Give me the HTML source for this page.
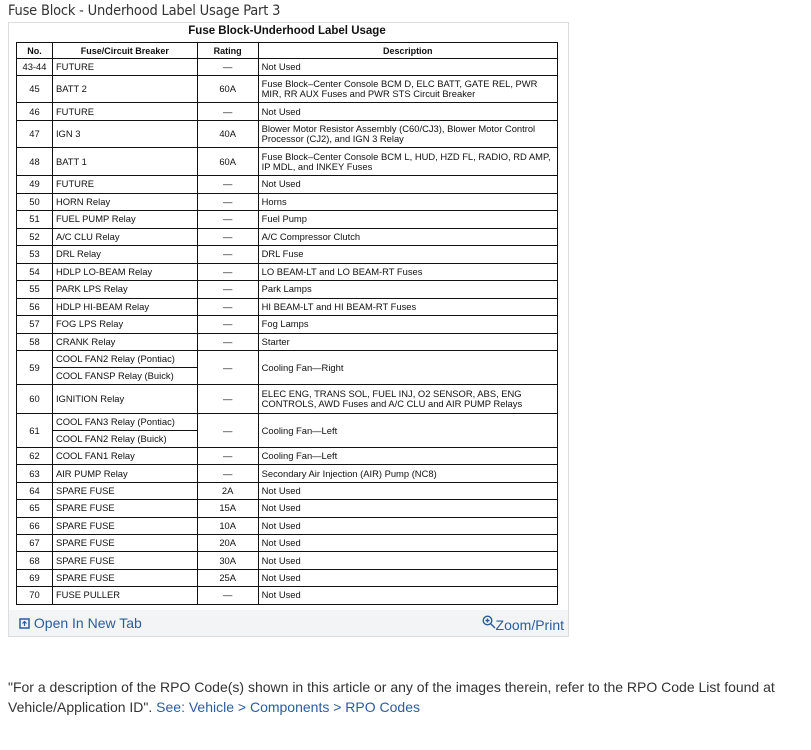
<!DOCTYPE html>
<html><head><meta charset="utf-8"><style>
body{margin:0;background:#fff;font-family:"Liberation Sans",sans-serif;}
.t{position:absolute;left:8px;top:3px;font-size:14.5px;color:#333;font-family:"DejaVu Sans Condensed","Liberation Sans Narrow","Liberation Sans",sans-serif;font-weight:300;letter-spacing:-0.2px}
.box{position:absolute;left:8px;top:22px;width:561px;height:615px;border:1px solid #ddd;background:#fff;box-sizing:border-box}
.cap{position:absolute;left:16px;top:25px;width:542px;text-align:center;font-weight:bold;font-size:11.5px;color:#111}
table{position:absolute;left:16px;top:42px;border-collapse:collapse;width:542px;font-size:9.4px;color:#111}
td,th{border:1px solid #111;padding:0 3px;line-height:10px}
th{font-size:9px;height:15px}
td.c{text-align:center}
.foot{position:absolute;left:9px;top:610px;width:559px;height:26px;background:#f2f4f6}
.foot a{position:absolute;top:5px;font-size:14px;color:#2a5da0;text-decoration:none;font-family:"Liberation Sans Narrow","Liberation Sans",sans-serif}
.p{position:absolute;left:8px;top:677px;width:790px;font-size:14px;line-height:20px;color:#333;font-family:"Liberation Sans Narrow","Liberation Sans",sans-serif}
.p a{color:#2a5da0;text-decoration:none}
</style></head><body>
<div class="t">Fuse Block - Underhood Label Usage Part 3</div>
<div class="box"></div>
<div class="cap">Fuse Block-Underhood Label Usage</div>
<table>
<colgroup><col style="width:36px"><col style="width:145px"><col style="width:61px"><col style="width:300px"></colgroup>
<tr><th>No.</th><th>Fuse/Circuit Breaker</th><th>Rating</th><th>Description</th></tr>
<tr style="height:17px"><td class="c">43-44</td><td>FUTURE</td><td class="c">—</td><td>Not Used</td></tr>
<tr style="height:27px"><td class="c">45</td><td>BATT 2</td><td class="c">60A</td><td>Fuse Block–Center Console BCM D, ELC BATT, GATE REL, PWR MIR, RR AUX Fuses and PWR STS Circuit Breaker</td></tr>
<tr style="height:18px"><td class="c">46</td><td>FUTURE</td><td class="c">—</td><td>Not Used</td></tr>
<tr style="height:27px"><td class="c">47</td><td>IGN 3</td><td class="c">40A</td><td>Blower Motor Resistor Assembly (C60/CJ3), Blower Motor Control Processor (CJ2), and IGN 3 Relay</td></tr>
<tr style="height:28px"><td class="c">48</td><td>BATT 1</td><td class="c">60A</td><td>Fuse Block–Center Console BCM L, HUD, HZD FL, RADIO, RD AMP, IP MDL, and INKEY Fuses</td></tr>
<tr style="height:17.5px"><td class="c">49</td><td>FUTURE</td><td class="c">—</td><td>Not Used</td></tr>
<tr style="height:17.5px"><td class="c">50</td><td>HORN Relay</td><td class="c">—</td><td>Horns</td></tr>
<tr style="height:17.5px"><td class="c">51</td><td>FUEL PUMP Relay</td><td class="c">—</td><td>Fuel Pump</td></tr>
<tr style="height:17.5px"><td class="c">52</td><td>A/C CLU Relay</td><td class="c">—</td><td>A/C Compressor Clutch</td></tr>
<tr style="height:17.5px"><td class="c">53</td><td>DRL Relay</td><td class="c">—</td><td>DRL Fuse</td></tr>
<tr style="height:17.5px"><td class="c">54</td><td>HDLP LO-BEAM Relay</td><td class="c">—</td><td>LO BEAM-LT and LO BEAM-RT Fuses</td></tr>
<tr style="height:17.5px"><td class="c">55</td><td>PARK LPS Relay</td><td class="c">—</td><td>Park Lamps</td></tr>
<tr style="height:17.5px"><td class="c">56</td><td>HDLP HI-BEAM Relay</td><td class="c">—</td><td>HI BEAM-LT and HI BEAM-RT Fuses</td></tr>
<tr style="height:17.5px"><td class="c">57</td><td>FOG LPS Relay</td><td class="c">—</td><td>Fog Lamps</td></tr>
<tr style="height:17.5px"><td class="c">58</td><td>CRANK Relay</td><td class="c">—</td><td>Starter</td></tr>
<tr style="height:17px"><td class="c" rowspan="2">59</td><td>COOL FAN2 Relay (Pontiac)</td><td class="c" rowspan="2">—</td><td rowspan="2">Cooling Fan—Right</td></tr>
<tr style="height:17px"><td>COOL FANSP Relay (Buick)</td></tr>
<tr style="height:29px"><td class="c">60</td><td>IGNITION Relay</td><td class="c">—</td><td>ELEC ENG, TRANS SOL, FUEL INJ, O2 SENSOR, ABS, ENG CONTROLS, AWD Fuses and A/C CLU and AIR PUMP Relays</td></tr>
<tr style="height:17px"><td class="c" rowspan="2">61</td><td>COOL FAN3 Relay (Pontiac)</td><td class="c" rowspan="2">—</td><td rowspan="2">Cooling Fan—Left</td></tr>
<tr style="height:17px"><td>COOL FAN2 Relay (Buick)</td></tr>
<tr style="height:17.4px"><td class="c">62</td><td>COOL FAN1 Relay</td><td class="c">—</td><td>Cooling Fan—Left</td></tr>
<tr style="height:17.4px"><td class="c">63</td><td>AIR PUMP Relay</td><td class="c">—</td><td>Secondary Air Injection (AIR) Pump (NC8)</td></tr>
<tr style="height:17.4px"><td class="c">64</td><td>SPARE FUSE</td><td class="c">2A</td><td>Not Used</td></tr>
<tr style="height:17.4px"><td class="c">65</td><td>SPARE FUSE</td><td class="c">15A</td><td>Not Used</td></tr>
<tr style="height:17.4px"><td class="c">66</td><td>SPARE FUSE</td><td class="c">10A</td><td>Not Used</td></tr>
<tr style="height:17.4px"><td class="c">67</td><td>SPARE FUSE</td><td class="c">20A</td><td>Not Used</td></tr>
<tr style="height:17.4px"><td class="c">68</td><td>SPARE FUSE</td><td class="c">30A</td><td>Not Used</td></tr>
<tr style="height:17.4px"><td class="c">69</td><td>SPARE FUSE</td><td class="c">25A</td><td>Not Used</td></tr>
<tr style="height:17.4px"><td class="c">70</td><td>FUSE PULLER</td><td class="c">—</td><td>Not Used</td></tr>
</table>
<div class="foot">
<a style="left:10px"><svg width="11" height="11" viewBox="0 0 11 11" style="vertical-align:-1px"><rect x="1" y="1" width="9" height="9" fill="none" stroke="#2a5da0" stroke-width="1.5"/><path d="M5.5 8V4M3.5 5.5L5.5 3.5L7.5 5.5" stroke="#2a5da0" stroke-width="1.2" fill="none"/></svg> Open In New Tab</a>
<a style="right:4px"><svg width="14" height="14" viewBox="0 0 14 14" style="vertical-align:1px"><circle cx="5.5" cy="5.5" r="4.3" fill="none" stroke="#2a5da0" stroke-width="1.4"/><path d="M8.6 8.6L13 13M5.5 3.5v4M3.5 5.5h4" stroke="#2a5da0" stroke-width="1.4"/></svg>Zoom/Print</a>
</div>
<div class="p">"For a description of the RPO Code(s) shown in this article or any of the images therein, refer to the RPO Code List found at Vehicle/Application ID". <a>See: Vehicle &gt; Components &gt; RPO Codes</a></div>
</body></html>
